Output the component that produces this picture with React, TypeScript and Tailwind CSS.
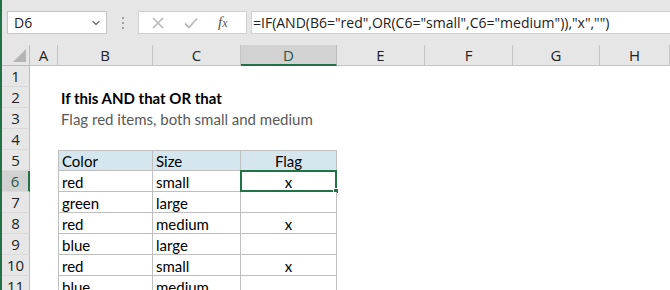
import { ChevronDown } from 'lucide-react'

const cols = ['A', 'B', 'C', 'D', 'E', 'F', 'G', 'H']

type Row = { n: number; b?: string; c?: string; d?: string; kind?: 'title' | 'sub' | 'head' | 'data' }

const rows: Row[] = [
  { n: 1 },
  { n: 2, b: 'If this AND that OR that', kind: 'title' },
  { n: 3, b: 'Flag red items, both small and medium', kind: 'sub' },
  { n: 4 },
  { n: 5, b: 'Color', c: 'Size', d: 'Flag', kind: 'head' },
  { n: 6, b: 'red', c: 'small', d: 'x', kind: 'data' },
  { n: 7, b: 'green', c: 'large', d: '', kind: 'data' },
  { n: 8, b: 'red', c: 'medium', d: 'x', kind: 'data' },
  { n: 9, b: 'blue', c: 'large', d: '', kind: 'data' },
  { n: 10, b: 'red', c: 'small', d: 'x', kind: 'data' },
  { n: 11, b: 'blue', c: 'medium', d: '', kind: 'data' },
]

const cellFont = "font-['Lato',sans-serif] text-[15px]"
const uiFont = "font-['Open_Sans',sans-serif]"

function TableCell({ text, first, head, align, selected }: { text?: string; first?: boolean; head?: boolean; align?: 'center'; selected?: boolean }) {
  return (
    <div
      className={`relative flex h-[21px] items-center border-r border-b border-[#bfbfbf] px-[3px] text-black ${cellFont} ${first ? 'border-l' : ''} ${head ? 'border-t bg-[#d6e6ee]' : 'bg-white'} ${align === 'center' ? 'justify-center' : ''}`}
    >
      <span className="leading-none pt-[2px]">{text}</span>
      {selected && (
        <div className="absolute -left-[1px] -top-[1px] -right-[1px] -bottom-[1px] border-2 border-[#217346]">
          <div className="absolute -right-[4px] -bottom-[4px] h-[6px] w-[6px] border border-white bg-[#217346]" />
        </div>
      )}
    </div>
  )
}

export default function App() {
  return (
    <div className="h-[290px] w-[670px] overflow-hidden border-l-2 border-[#217346] bg-white">
      {/* formula bar */}
      <div className="flex h-[45px] items-center bg-[#e6e6e6]">
        <div className={`ml-[5px] flex h-[23px] w-[100px] items-center justify-between border border-[#c6c6c6] bg-white pl-[6px] pr-[4px] text-[14px] text-[#222] ${uiFont}`}>
          <span>D6</span>
          <ChevronDown size={12} strokeWidth={3} className="text-[#7a7a7a]" />
        </div>
        <div className="flex w-[31px] flex-col items-center gap-[3px]">
          <span className="h-[2px] w-[2px] bg-[#a0a0a0]" />
          <span className="h-[2px] w-[2px] bg-[#a0a0a0]" />
          <span className="h-[2px] w-[2px] bg-[#a0a0a0]" />
        </div>
        <div className="flex h-[23px] w-[109px] items-center border border-[#d0d0d0] bg-white">
          <svg width="12" height="12" viewBox="0 0 12 12" className="ml-[13px]">
            <path d="M1 1L11 11M11 1L1 11" stroke="#b8b8b8" strokeWidth="1.6" />
          </svg>
          <svg width="14" height="12" viewBox="0 0 14 12" className="ml-[20px]">
            <path d="M1 6.5L5 10.5L13 1.5" stroke="#b8b8b8" strokeWidth="1.8" fill="none" />
          </svg>
          <span className="ml-[20px] font-['Liberation_Serif',serif] text-[15px] italic text-[#555]">
            f<span className="text-[12px]">x</span>
          </span>
        </div>
        <div className={`ml-[4px] flex h-[23px] flex-1 items-center border border-r-0 border-[#d0d0d0] bg-white pl-[1px] text-[14px] text-[#222] ${uiFont}`}>
          =IF(AND(B6="red",OR(C6="small",C6="medium")),"x","")
        </div>
      </div>

      {/* sheet */}
      <div className="grid grid-cols-[28px_28px_95px_88px_96px_88px_88px_87px_1fr]">
        {/* column headers */}
        <div className="relative h-[21px] border-r border-b border-[#bcbcbc] bg-[#e6e6e6]">
          <svg width="13" height="13" viewBox="0 0 13 13" className="absolute right-[3px] bottom-[3px]">
            <path d="M13 0V13H0Z" fill="#b4b4b4" />
          </svg>
        </div>
        {cols.map((c) =>
          c === 'D' ? (
            <div key={c} className={`flex h-[21px] items-center justify-center border-r border-b-2 border-r-[#bcbcbc] border-b-[#217346] bg-[#d2d2d2] pt-[1px] text-[15px] text-[#2b5743] ${uiFont}`}>
              {c}
            </div>
          ) : (
            <div key={c} className={`flex h-[21px] items-center justify-center border-r border-b border-[#c4c4c4] bg-[#e6e6e6] text-[15px] text-[#222] ${uiFont}`}>
              {c}
            </div>
          )
        )}

        {rows.map((r) => (
          <RowView key={r.n} r={r} />
        ))}
      </div>
    </div>
  )
}

function RowView({ r }: { r: Row }) {
  const sel = r.n === 6
  const inTable = r.kind === 'head' || r.kind === 'data'
  return (
    <>
      <div
        className={`flex h-[21px] items-center justify-center border-b border-[#dadada] pt-[1px] text-[15px] ${uiFont} ${sel ? 'border-r-2 border-r-[#217346] bg-[#d2d2d2] text-[#2b5743]' : 'border-r border-r-[#bcbcbc] bg-[#e6e6e6] text-[#222]'}`}
      >
        {r.n}
      </div>
      <div className="h-[21px]" />
      {inTable ? (
        <>
          <TableCell text={r.b} first head={r.kind === 'head'} />
          <TableCell text={r.c} head={r.kind === 'head'} />
          <TableCell text={r.d} head={r.kind === 'head'} align="center" selected={sel} />
        </>
      ) : (
        <div className={`col-span-3 flex h-[21px] items-center whitespace-nowrap px-[3px] ${cellFont} ${r.kind === 'title' ? 'font-bold text-black' : 'text-[#595959]'}`}>
          <span className="pt-[2px]">{r.b}</span>
        </div>
      )}
      <div className="h-[21px]" />
      <div className="h-[21px]" />
      <div className="h-[21px]" />
      <div className="h-[21px]" />
    </>
  )
}
